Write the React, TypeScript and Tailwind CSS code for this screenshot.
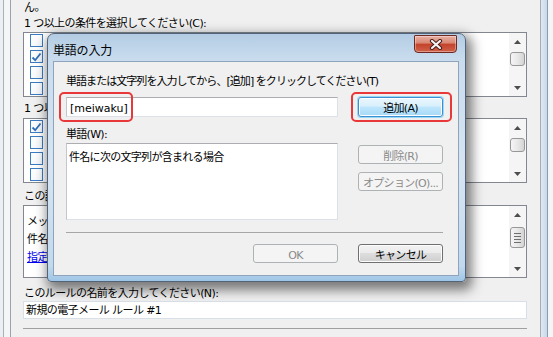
import React from "react";

function Check({ checked }: { checked?: boolean }) {
  return (
    <div className="w-[13px] h-[13px] shrink-0 border border-[#3a7cc4] bg-[linear-gradient(135deg,#ffffff,#f2f6fa)] flex items-center justify-center">
      {checked && (
        <svg width="11" height="10" viewBox="0 0 11 10">
          <path d="M1.5 5.5 L4.2 8.2 L9.5 1.5" fill="none" stroke="#2f6fb8" strokeWidth="1.8" />
        </svg>
      )}
    </div>
  );
}

function Tri({ up }: { up?: boolean }) {
  return (
    <svg width="7" height="4" viewBox="0 0 7 4">
      <path d={up ? "M0 4 L3.5 0 L7 4 Z" : "M0 0 L7 0 L3.5 4 Z"} fill="#4d4d4d" />
    </svg>
  );
}

function ScrollBar({ thumb, grip }: { thumb: string; grip?: boolean }) {
  return (
    <div className="w-[17px] shrink-0 flex flex-col bg-[#f5f5f5]">
      <div className="h-[17px] flex items-center justify-center">
        <Tri up />
      </div>
      <div className="flex-1 px-[1px]">
        <div
          className={`${thumb} rounded-[3px] border border-[#979797] bg-[linear-gradient(90deg,#f5f5f5,#e6e6e6_55%,#d4d4d4)] flex flex-col items-center justify-center gap-[2px]`}
        >
          {grip && (
            <>
              <div className="w-[7px] h-[1px] bg-[#6f6f6f]" />
              <div className="w-[7px] h-[1px] bg-[#6f6f6f]" />
              <div className="w-[7px] h-[1px] bg-[#6f6f6f]" />
              <div className="w-[7px] h-[1px] bg-[#6f6f6f]" />
            </>
          )}
        </div>
      </div>
      <div className="h-[17px] flex items-center justify-center">
        <Tri />
      </div>
    </div>
  );
}

// the labels of these rows sit under the dialog, so only the boxes show
function CheckRow({ checked }: { checked?: boolean }) {
  return (
    <div className="h-[16px] flex items-center">
      <Check checked={checked} />
    </div>
  );
}

type BtnKind = "normal" | "default" | "disabled";

function Btn({ label, kind, className }: { label: string; kind: BtnKind; className: string }) {
  const styles: Record<BtnKind, string> = {
    normal:
      "border-[#707070] bg-[linear-gradient(180deg,#f2f2f2_0%,#ebebeb_45%,#dddddd_50%,#cfcfcf_100%)] shadow-[inset_0_0_0_1px_#fcfcfc]",
    default:
      "border-[#3c8fd0] bg-[linear-gradient(180deg,#eaf6fd_0%,#d9f0fc_45%,#bee6fd_50%,#a7d9f5_100%)] shadow-[inset_0_0_0_1px_#ffffff,0_0_0_1px_#9ad8f7]",
    disabled: "border-[#adb2b5] bg-[#f4f4f4] text-[#8a8a8a]",
  };
  return (
    <div className={`${className} ${styles[kind]} rounded-[3px] border flex items-center justify-center pt-[4px] leading-[12px]`}>
      {label}
    </div>
  );
}

function CloseButton() {
  return (
    <div className="mt-[1px] w-[43px] h-[18px] rounded-b-[4px] rounded-t-[1px] border border-[#6e2a22] bg-[linear-gradient(180deg,#eab0a4_0%,#d88672_45%,#c4422b_50%,#d06249_100%)] shadow-[inset_0_0_0_1px_rgba(255,255,255,0.35)] flex items-center justify-center">
      <svg width="14" height="11" viewBox="0 0 14 11">
        <path d="M3 2 L11 9 M11 2 L3 9" stroke="#4a1f1a" strokeWidth="4.2" strokeLinecap="round" />
        <path d="M3 2 L11 9 M11 2 L3 9" stroke="#f4f4f4" strokeWidth="2.2" strokeLinecap="round" />
      </svg>
    </div>
  );
}

function WordDialog() {
  return (
    <div className="absolute left-[47px] top-[33px] w-[419px] h-[249px] flex flex-col rounded-t-[7px] rounded-b-[4px] border border-[#52637a] bg-[linear-gradient(180deg,#b3cce3_0%,#c9dcee_10%,#d7e5f2_55%,#c2d9ee_94%,#9fc6e6_100%)] shadow-[3px_5px_12px_3px_rgba(0,0,0,0.5)]">
      <div className="h-[28px] shrink-0 flex justify-between pl-[5px] pr-[8px]">
        <div className="self-center mt-[5px] text-[12px] leading-[14px] tracking-[-0.2px]">単語の入力</div>
        <CloseButton />
      </div>
      <div className="relative flex-1 mb-[6px] ml-[6px] mr-[7px] bg-[#f0f0f0] shadow-[0_0_0_1px_#8ea4bd] flex flex-col pt-[10px] pl-[12px] pr-[15px] tracking-[-0.7px]">
        <div className="h-[16px] pt-[4px] leading-[12px] whitespace-nowrap tracking-[-0.95px]">
          単語または文字列を入力してから、[追加] をクリックしてください(T)
        </div>
        <div className="mt-[9px] flex justify-between">
          <div className="w-[272px] h-[20px] bg-white border border-[#dbe1e8] border-t-[#abadb3] border-l-[#c3c7cd] pl-[3px] pt-[3px] leading-[15px] tracking-normal">
            [meiwaku]
          </div>
          <Btn label="追加(A)" kind="default" className="w-[85px] h-[20px]" />
        </div>
        <div className="mt-[8px] h-[16px] pt-[4px] leading-[12px]">単語(W):</div>
        <div className="mt-[2px] flex justify-between">
          <div className="w-[272px] h-[77px] bg-white border border-[#dbe1e8] border-t-[#abadb3] border-l-[#c3c7cd] pl-[2px] pt-[6px] leading-[16px] whitespace-nowrap">
            件名に次の文字列が含まれる場合
          </div>
          <div className="w-[85px] flex flex-col gap-[8px] pt-[2px]">
            <Btn label="削除(R)" kind="disabled" className="h-[19px]" />
            <Btn label="オプション(O)..." kind="disabled" className="h-[19px]" />
          </div>
        </div>
        <div className="mt-[12px] h-[1px] bg-[#a6a6a6]" />
        <div className="mt-[11px] flex justify-end gap-[20px]">
          <Btn label="OK" kind="disabled" className="w-[85px] h-[19px]" />
          <Btn label="キャンセル" kind="normal" className="w-[85px] h-[19px]" />
        </div>

        <div className="absolute left-[5px] top-[30px] w-[74px] h-[30px] rounded-[5px] border-2 border-[#e8383a]" />
        <div className="absolute left-[297px] top-[30px] w-[101px] h-[30px] rounded-[5px] border-2 border-[#e8383a]" />
      </div>
    </div>
  );
}

export default function App() {
  return (
    <div className="relative w-[553px] h-[337px] overflow-hidden bg-[#f0f0f0] flex text-[11px] tracking-[-0.6px] text-black font-['DejaVu_Sans','Noto_Sans_CJK_JP',sans-serif]">
      <div className="w-[11px] shrink-0 flex">
        <div className="w-[3px] bg-[#eceff2]" />
        <div className="w-[1px] bg-[#a9b1ba]" />
        <div className="w-[6px] bg-[#f3f5f7]" />
        <div className="w-[1px] bg-[#9aa3ad]" />
      </div>

      <div className="flex-1 flex flex-col pl-[12px] pr-[13px]">
        <div className="h-[12px] pt-[2px] leading-[12px] pl-[1px]">ん。</div>
        <div className="mt-[2px] h-[16px] pt-[4px] leading-[12px] pl-[1px] whitespace-nowrap">
          1 つ以上の条件を選択してください(C):
        </div>
        <div className="mt-[2px] h-[65px] flex border border-[#828790] bg-white">
          <div className="flex-1 flex flex-col pl-[6px] overflow-hidden">
            <CheckRow />
            <CheckRow checked />
            <CheckRow />
            <CheckRow />
          </div>
          <ScrollBar thumb="mt-[2px] h-[14px]" />
        </div>

        <div className="mt-[2px] h-[16px] pt-[4px] leading-[12px] pl-[1px] whitespace-nowrap">
          1 つ以上の処理を選択してください(A):
        </div>
        <div className="mt-[3px] h-[65px] flex border border-[#828790] bg-white">
          <div className="flex-1 flex flex-col pl-[6px] overflow-hidden">
            <CheckRow checked />
            <CheckRow />
            <CheckRow />
            <CheckRow />
          </div>
          <ScrollBar thumb="mt-[2px] h-[14px]" />
        </div>

        <div className="mt-[4px] h-[16px] pt-[4px] leading-[12px] pl-[1px] whitespace-nowrap">
          この説明を編集してください(D):
        </div>
        <div className="mt-[2px] h-[73px] flex border border-[#828790] bg-white">
          <div className="flex-1 flex flex-col pl-[3px] pt-[5px] overflow-hidden whitespace-nowrap">
            <div className="h-[18px] pt-[4px] leading-[14px]">メッセージ受信後</div>
            <div className="h-[18px] pt-[4px] leading-[14px]">件名に 指定 が含まれる</div>
            <div className="h-[18px] pt-[4px] leading-[14px]">
              <span className="text-[#0000ee] underline">指定</span> フォルダー
            </div>
          </div>
          <ScrollBar thumb="mt-[4px] h-[21px]" grip />
        </div>

        <div className="mt-[6px] h-[16px] pt-[4px] leading-[12px] pl-[1px] whitespace-nowrap">
          このルールの名前を入力してください(N):
        </div>
        <div className="mt-[1px] h-[18px] border border-[#d9dfe6] bg-white pl-[2px] pt-[2px] leading-[14px] whitespace-nowrap">
          新規の電子メール ルール #1
        </div>
        <div className="mt-[9px] h-[1px] bg-[#a0a0a0]" />
      </div>

      <div className="w-[13px] shrink-0 flex">
        <div className="w-[1px] bg-[#a3acb6]" />
        <div className="w-[6px] bg-[linear-gradient(90deg,#dfe8f1,#c9d9e9)]" />
        <div className="w-[1px] bg-[#8d9cad]" />
        <div className="flex-1 bg-[#f4f5f6]" />
      </div>

      <WordDialog />
    </div>
  );
}
